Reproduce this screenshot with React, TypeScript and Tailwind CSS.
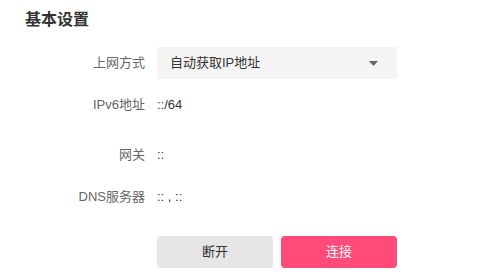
const font = { fontFamily: '"Liberation Sans", "Noto Sans CJK SC", sans-serif' };

function Row({ label, children, className = '' }: { label: string; children: React.ReactNode; className?: string }) {
  return (
    <div className={`flex items-center h-8 ${className}`}>
      <div className="w-[145px] pr-0 text-right text-[13px] text-[#666]">{label}</div>
      <div className="ml-3 flex-1 text-[13px] text-[#333]">{children}</div>
    </div>
  );
}

export default function App() {
  return (
    <div className="w-[500px] h-[277px] bg-white relative" style={font}>
      <div className="pt-[8px] pl-[25px] text-[16px] leading-6 font-bold text-[#333]">基本设置</div>
      <div className="mt-[15px]">
        <div className="flex items-center h-8">
          <div className="w-[145px] text-right text-[13px] text-[#666]">上网方式</div>
          <div className="ml-3 w-[240px] h-8 bg-[#f4f4f4] flex items-center justify-between pl-[13px] pr-[19px] text-[13px] text-[#333]">
            <span>自动获取IP地址</span>
            <svg width="9" height="5" viewBox="0 0 9 5">
              <path d="M0 0 L9 0 L4.5 5 Z" fill="#666" />
            </svg>
          </div>
        </div>
        <Row label="IPv6地址" className="mt-[10px]">::/64</Row>
        <Row label="网关" className="mt-[18px]">::</Row>
        <Row label="DNS服务器" className="mt-[10px]">:: , ::</Row>
        <div className="flex gap-2 ml-[157px] mt-[23px]">
          <button className="w-[116px] h-8 rounded bg-[#e6e6e6] text-[13px] text-[#333]">断开</button>
          <button className="w-[116px] h-8 rounded bg-[#ff4a7a] text-[13px] text-white">连接</button>
        </div>
      </div>
    </div>
  );
}
